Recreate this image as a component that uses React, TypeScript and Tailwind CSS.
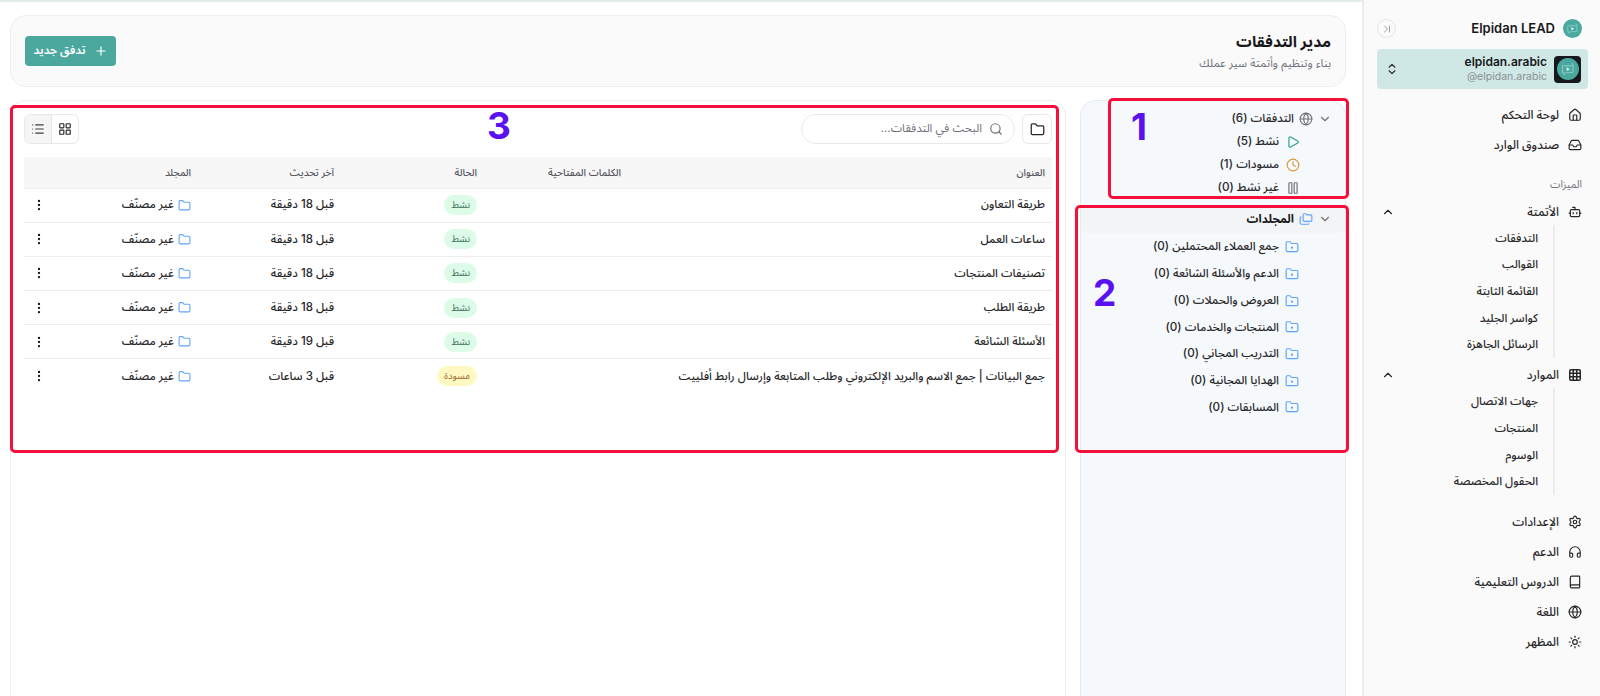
import { House, Inbox, Bot, Grid3x3, Settings, Headphones, Book, Globe, Sun, ChevronUp, ChevronDown, ChevronsUpDown, ChevronLast, Play, Clock, Pause, Folders, FolderDot, Folder, Search, LayoutGrid, List, Plus, EllipsisVertical } from "lucide-react";

function Logo({ size }: { size: number }) {
  return (
    <svg width={size} height={size} viewBox="0 0 24 24">
      <circle cx="12" cy="12" r="12" fill="#4ba89e" />
      <path d="M6 8.5h11.5v7.5H10l-2.5 2v-2H6z" fill="none" stroke="#8fd0c8" strokeWidth="1" />
      <path d="M16 5.5l2 3" stroke="#8fd0c8" strokeWidth="1" />
      <path d="M10.6 10.2l3.4 2-3.4 2z" fill="#e8f6f4" />
    </svg>
  );
}

function NavItem({ icon, label, chevron }: { icon: React.ReactNode; label: string; chevron?: boolean }) {
  return (
    <div className={"flex items-center gap-[9px] text-[12px] font-medium text-[#27272a] " + (chevron ? "h-[27px]" : "h-[30px]")}>
      <span className="flex w-[14px] justify-center">{icon}</span>
      <span className="flex-1">{label}</span>
      {chevron && <ChevronUp size={14} strokeWidth={2} className="ml-[4px] text-[#27272a]" />}
    </div>
  );
}

function SubNav({ items }: { items: string[] }) {
  return (
    <div className="mr-[27px] border-r-2 border-[#ececec] pr-[15px]">
      {items.map((t) => (
        <div key={t} className="flex h-[26.7px] items-center text-[11.5px] font-medium text-[#27272a]">{t}</div>
      ))}
    </div>
  );
}

function Sidebar() {
  return (
    <aside className="flex h-full w-[238px] shrink-0 flex-col border-l-2 border-[#ececec] bg-[#fafafa] pl-[13px] pr-[18px] pt-[19px]">
      <div className="flex h-[19px] items-center gap-[8px]">
        <Logo size={19} />
        <span className="flex-1 text-[13px] font-semibold text-[#18181b]" dir="ltr" style={{ textAlign: "right" }}>Elpidan LEAD</span>
        <span className="flex h-[19px] w-[19px] items-center justify-center rounded-full border border-[#e5e5e5] text-[#a1a1aa]">
          <ChevronLast size={12} />
        </span>
      </div>
      <div className="-mr-[6px] mt-[11px] flex h-[40px] items-center gap-[7px] rounded-[4px] bg-[#cfe8e6] pl-[8px] pr-[7px]">
        <span className="flex h-[27px] w-[27px] items-center justify-center rounded-[4px] bg-[#15181c]"><Logo size={22} /></span>
        <div className="flex flex-1 flex-col items-end leading-[15px]">
          <span className="self-start text-[12px] font-semibold text-[#18181b]" dir="ltr">elpidan.arabic</span>
          <span className="self-start text-[10.5px] text-[#8a8f94]" dir="ltr">@elpidan.arabic</span>
        </div>
        <ChevronsUpDown size={14} className="text-[#27272a]" />
      </div>
      <div className="mt-[11px]">
        <NavItem icon={<House size={14} />} label="لوحة التحكم" />
        <NavItem icon={<Inbox size={14} />} label="صندوق الوارد" />
      </div>
      <div className="flex h-[38px] items-center pt-[12px] text-[10.5px] text-[#71717a]">الميزات</div>
      <NavItem chevron icon={<Bot size={14} />} label="الأتمتة" />
      <SubNav items={["التدفقات", "القوالب", "القائمة الثابتة", "كواسر الجليد", "الرسائل الجاهزة"]} />
      <div className="mt-[3px]">
        <NavItem chevron icon={<Grid3x3 size={14} strokeWidth={2.6} />} label="الموارد" />
      </div>
      <SubNav items={["جهات الاتصال", "المنتجات", "الوسوم", "الحقول المخصصة"]} />
      <div className="mt-[12px]">
        <NavItem icon={<Settings size={14} />} label="الإعدادات" />
        <NavItem icon={<Headphones size={14} />} label="الدعم" />
        <NavItem icon={<Book size={14} />} label="الدروس التعليمية" />
        <NavItem icon={<Globe size={14} />} label="اللغة" />
        <NavItem icon={<Sun size={14} />} label="المظهر" />
      </div>
    </aside>
  );
}

function FilterPanel() {
  const folders = ["جمع العملاء المحتملين (0)", "الدعم والأسئلة الشائعة (0)", "العروض والحملات (0)", "المنتجات والخدمات (0)", "التدريب المجاني (0)", "الهدايا المجانية (0)", "المسابقات (0)"];
  const status = [
    { icon: <Play size={14} className="text-[#2f9e8f]" />, label: "نشط (5)" },
    { icon: <Clock size={14} className="text-[#d9973f]" />, label: "مسودات (1)" },
    { icon: <Pause size={14} className="text-[#71717a]" />, label: "غير نشط (0)" },
  ];
  return (
    <div className="h-full w-[266px] shrink-0 rounded-t-2xl border border-b-0 border-[#e8eaee] bg-[#f6f9fc] pt-[6px] text-[11.7px] font-medium text-[#27272a]">
      <div className="flex h-[23px] items-center gap-[5px] pr-[13px]">
        <ChevronDown size={14} className="text-[#71717a]" />
        <Globe size={14} className="text-[#71717a]" />
        <span>التدفقات (6)</span>
      </div>
      {status.map((s) => (
        <div key={s.label} className="flex h-[23.3px] items-center gap-[7px] pr-[45px]">
          {s.icon}
          <span>{s.label}</span>
        </div>
      ))}
      <div className="mt-[6px] flex h-[27px] items-center gap-[5px] rounded-md bg-[#f2f4f6] pr-[13px] font-bold text-[#18181b]">
        <ChevronDown size={14} className="text-[#71717a]" />
        <Folders size={14} className="text-[#60a5fa]" />
        <span>المجلدات</span>
      </div>
      <div className="mt-[1px]">
        {folders.map((f) => (
          <div key={f} className="flex h-[26.7px] items-center gap-[6px] pr-[46px]">
            <FolderDot size={14} className="text-[#60a5fa]" />
            <span>{f}</span>
          </div>
        ))}
      </div>
    </div>
  );
}

const rows = [
  { t: "طريقة التعاون", u: "قبل 18 دقيقة", s: "نشط" },
  { t: "ساعات العمل", u: "قبل 18 دقيقة", s: "نشط" },
  { t: "تصنيفات المنتجات", u: "قبل 18 دقيقة", s: "نشط" },
  { t: "طريقة الطلب", u: "قبل 18 دقيقة", s: "نشط" },
  { t: "الأسئلة الشائعة", u: "قبل 19 دقيقة", s: "نشط" },
  { t: "جمع البيانات | جمع الاسم والبريد الإلكتروني وطلب المتابعة وإرسال رابط أفلييت", u: "قبل 3 ساعات", s: "مسودة" },
];

function TablePanel() {
  return (
    <div className="h-full flex-1 rounded-t-2xl border border-b-0 border-[#eeeeee] bg-white px-[13px] pt-[13px]">
      <div className="flex h-[30px] items-center">
        <span className="flex h-[30px] w-[30px] items-center justify-center rounded-md border border-[#e8e8e8] text-[#27272a]"><Folder size={15} /></span>
        <div className="mr-[7px] flex h-[30px] w-[214px] items-center gap-[7px] rounded-full border border-[#e8e8e8] pr-[11px] text-[11.5px] text-[#71717a]">
          <Search size={14} />
          <span>البحث في التدفقات...</span>
        </div>
        <div className="mr-auto flex h-[30px] w-[55px] overflow-hidden rounded-md border border-[#e8e8e8]">
          <span className="flex flex-1 items-center justify-center text-[#27272a]"><LayoutGrid size={14} /></span>
          <span className="flex flex-1 items-center justify-center border-r border-[#e8e8e8] bg-[#f5f5f5] text-[#3f3f46]"><List size={14} /></span>
        </div>
      </div>
      <table className="mt-[13px] w-[1028px] table-fixed border-collapse text-right">
        <colgroup>
          <col className="w-[424px]" />
          <col className="w-[144px]" />
          <col className="w-[143px]" />
          <col className="w-[143px]" />
          <col className="w-[146px]" />
          <col className="w-[28px]" />
        </colgroup>
        <thead>
          <tr className="h-[31px] border-b border-[#ececec] bg-[#f7f7f7] text-[10px] font-normal text-[#52525b]">
            {["العنوان", "الكلمات المفتاحية", "الحالة", "آخر تحديث", "المجلد", ""].map((h, i) => (
              <th key={i} className="px-[7px] font-medium">{h}</th>
            ))}
          </tr>
        </thead>
        <tbody>
          {rows.map((r, i) => (
            <tr key={i} className={"h-[34.2px] text-[11.5px] font-medium text-[#27272a] " + (i < 5 ? "border-b border-[#ececec]" : "")}>
              <td className="truncate px-[7px]">{r.t}</td>
              <td />
              <td className="px-[7px]">
                <span className={"inline-flex h-[20px] items-center rounded-full px-[7px] text-[9.5px] font-normal " + (r.s === "نشط" ? "bg-[#dcfce7] text-[#3f6f5a]" : "bg-[#fef9c3] text-[#a0662a]")}>{r.s}</span>
              </td>
              <td className="px-[7px]">{r.u}</td>
              <td className="px-[7px]">
                <span className="flex items-center gap-[4px]">
                  <Folder size={13} className="text-[#60a5fa]" />
                  غير مصنّف
                </span>
              </td>
              <td className="pr-[6px]"><EllipsisVertical size={14} className="text-[#18181b]" /></td>
            </tr>
          ))}
        </tbody>
      </table>
    </div>
  );
}

function Mark({ className, n, numClass }: { className: string; n?: string; numClass?: string }) {
  return <div className={"absolute rounded-[5px] border-[3.5px] border-[#f5103c] " + className}>{n && <span className={"absolute text-[37px] font-bold leading-none text-[#5a10f0] " + numClass}>{n}</span>}</div>;
}

export default function App() {
  return (
    <div dir="rtl" className="relative flex h-[696px] w-[1600px] overflow-hidden bg-white" style={{ fontFamily: 'Inter, "Noto Sans Arabic", sans-serif' }}>
      <Sidebar />
      <main className="flex min-w-0 flex-1 flex-col border-t-2 border-[#e3eeec] pl-[10px] pr-[16px] pt-[13px]">
        <div className="flex h-[72px] shrink-0 items-center justify-between rounded-2xl border border-[#eeeeee] bg-[#fafafa] pl-[14px] pr-[14px]">
          <div>
            <h1 className="text-[15.5px] font-bold leading-[24px] text-[#18181b]">مدير التدفقات</h1>
            <p className="text-[11.5px] leading-[18px] text-[#71717a]">بناء وتنظيم وأتمتة سير عملك</p>
          </div>
          <button className="flex h-[30px] w-[91px] items-center justify-center gap-[8px] rounded-[4px] bg-[#4ba89e] text-[11.5px] font-semibold text-white">
            <Plus size={14} />
            تدفق جديد
          </button>
        </div>
        <div className="mt-[13px] flex min-h-0 flex-1 gap-[14px]">
          <FilterPanel />
          <TablePanel />
        </div>
      </main>
      <Mark className="left-[1108px] top-[98px] h-[101px] w-[241px]" n="1" numClass="left-[20px] top-[7px]" />
      <Mark className="left-[1075px] top-[205px] h-[248px] w-[274px]" n="2" numClass="left-[15px] top-[66px]" />
      <Mark className="left-[10px] top-[105px] h-[348px] w-[1049px]" n="3" numClass="left-[474px] top-[-1px]" />
    </div>
  );
}
